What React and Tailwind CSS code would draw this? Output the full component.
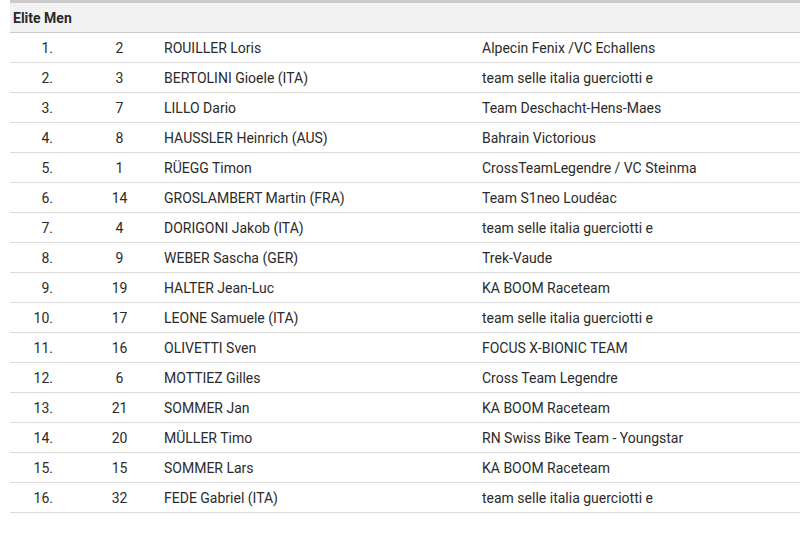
import React from 'react'

const rows = [
  ['1.', '2', 'ROUILLER Loris', 'Alpecin Fenix /VC Echallens'],
  ['2.', '3', 'BERTOLINI Gioele (ITA)', 'team selle italia guerciotti e'],
  ['3.', '7', 'LILLO Dario', 'Team Deschacht-Hens-Maes'],
  ['4.', '8', 'HAUSSLER Heinrich (AUS)', 'Bahrain Victorious'],
  ['5.', '1', 'RÜEGG Timon', 'CrossTeamLegendre / VC Steinma'],
  ['6.', '14', 'GROSLAMBERT Martin (FRA)', 'Team S1neo Loudéac'],
  ['7.', '4', 'DORIGONI Jakob (ITA)', 'team selle italia guerciotti e'],
  ['8.', '9', 'WEBER Sascha (GER)', 'Trek-Vaude'],
  ['9.', '19', 'HALTER Jean-Luc', 'KA BOOM Raceteam'],
  ['10.', '17', 'LEONE Samuele (ITA)', 'team selle italia guerciotti e'],
  ['11.', '16', 'OLIVETTI Sven', 'FOCUS X-BIONIC TEAM'],
  ['12.', '6', 'MOTTIEZ Gilles', 'Cross Team Legendre'],
  ['13.', '21', 'SOMMER Jan', 'KA BOOM Raceteam'],
  ['14.', '20', 'MÜLLER Timo', 'RN Swiss Bike Team - Youngstar'],
  ['15.', '15', 'SOMMER Lars', 'KA BOOM Raceteam'],
  ['16.', '32', 'FEDE Gabriel (ITA)', 'team selle italia guerciotti e'],
]

export default function App() {
  return (
    <div className="w-[800px] h-[533px] bg-white pl-[10px] text-[14px] text-[#2b2b2b] font-['Roboto',sans-serif]">
      {/* category header */}
      <div className="h-[33px] border-t-[3px] border-b border-[#cbcbcb] bg-[#f2f2f2] flex items-center pl-[3px] pt-[2px] font-bold">
        Elite Men
      </div>

      {rows.map(([rank, bib, name, team]) => (
        <div key={rank} className="h-[30px] border-b border-[#dcdcdc] flex items-center pt-[2px]">
          <div className="w-[43px] text-right">{rank}</div>
          <div className="w-[111px] pl-[22px] text-center">{bib}</div>
          <div className="w-[318px]">{name}</div>
          <div className="flex-1">{team}</div>
        </div>
      ))}
    </div>
  )
}
